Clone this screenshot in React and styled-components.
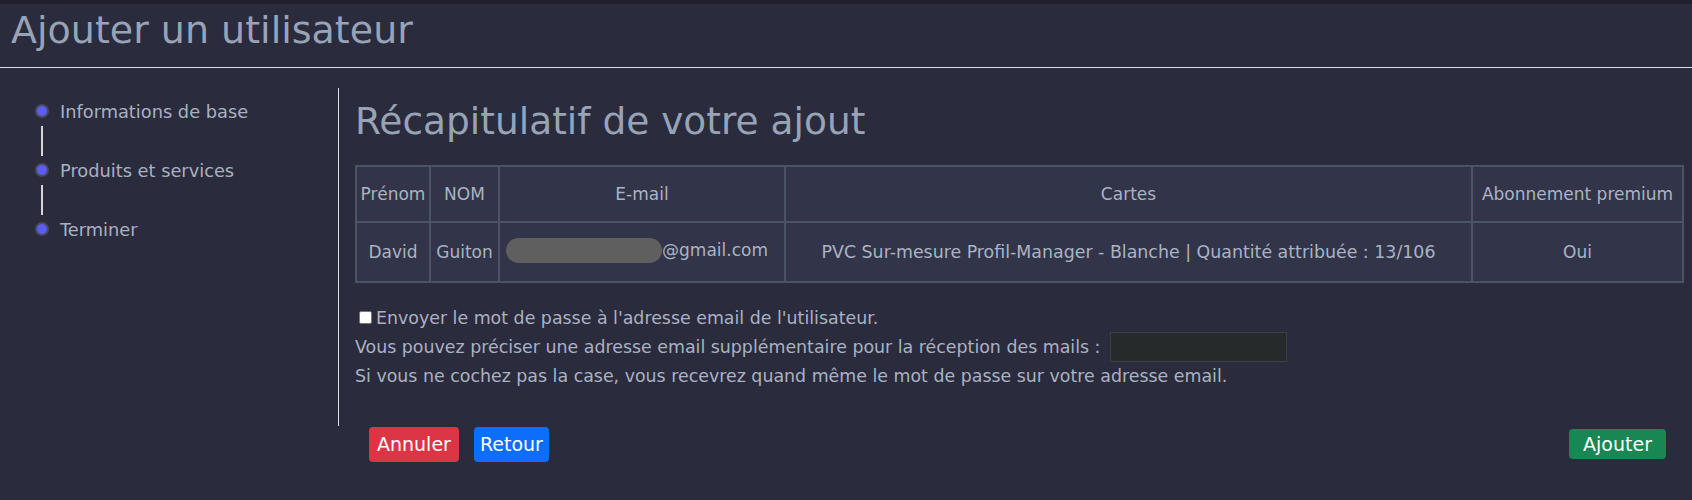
import React from "react";
import styled, { createGlobalStyle } from "styled-components";

const GlobalStyle = createGlobalStyle`
  html, body {
    margin: 0;
    padding: 0;
    background: #2a2b3d;
  }
  body {
    font-family: "DejaVu Sans", "Open Sans", sans-serif;
    color: #aab2c2;
  }
  * { box-sizing: border-box; }
`;

const Page = styled.div`
  width: 1692px;
  min-height: 500px;
  background: #2a2b3d;
`;

const TopStrip = styled.div`
  height: 4px;
  background: #1f202c;
`;

const Header = styled.header`
  height: 64px;
  padding: 4px 0 0 11px;
  border-bottom: 1px solid #dcdcdc;
`;

const Title = styled.h1`
  margin: 0;
  font-size: 38px;
  line-height: 45px;
  font-weight: 400;
  color: #98a3b6;
`;

const Body = styled.div`
  display: flex;
  padding-top: 20px;
`;

const Sidebar = styled.nav`
  width: 338px;
  flex: 0 0 338px;
  padding: 11px 0 0 35px;
`;

const Step = styled.div`
  display: flex;
  align-items: center;
  gap: 11px;
  height: 24px;
  font-size: 17.8px;
  color: #a9b1c1;
`;

const Dot = styled.span`
  width: 14px;
  height: 14px;
  border-radius: 50%;
  background: #5a5cfb;
  border: 2px solid #4a4b57;
  flex: 0 0 14px;
`;

const Connector = styled.div`
  width: 2px;
  height: 30px;
  margin: 3px 0 2px 6px;
  background: #d6d6d6;
`;

const Main = styled.main`
  flex: 1;
  padding-right: 11px;
`;

const Panel = styled.section`
  border-left: 1px solid #dedede;
  padding: 12px 0 37px 16px;
`;

const Heading = styled.h2`
  margin: 0 0 22px;
  font-size: 37.5px;
  line-height: 43px;
  font-weight: 400;
  color: #98a3b6;
`;

const Table = styled.table`
  width: 100%;
  border-collapse: collapse;
  table-layout: fixed;
  background: #323449;
  font-size: 17px;
  color: #aab3c3;
`;

const Col = styled.col`
  width: ${(p) => p.$w}px;
`;

const HeadCell = styled.th`
  border: 2px solid #4b5466;
  font-weight: 400;
  height: 56px;
  padding: 0 2px;
  text-align: center;
  white-space: nowrap;
`;

const Cell = styled.td`
  border: 2px solid #4b5466;
  height: 60px;
  padding: 0 ${(p) => p.$pr || 2}px 0 2px;
  text-align: center;
  white-space: nowrap;
  font-size: ${(p) => p.$fs || 17}px;
`;

const EmailWrap = styled.span`
  display: inline-flex;
  align-items: center;
`;

const Blur = styled.span`
  display: inline-block;
  width: 156px;
  height: 25px;
  border-radius: 13px;
  background: #5f5f5f;
`;

const Options = styled.div`
  margin-top: 21px;
  font-size: 17.4px;
  color: #aab2c2;
`;

const Line = styled.div`
  display: flex;
  align-items: center;
  min-height: 27px;
  white-space: nowrap;
  margin: ${(p) => p.$m || "0"};
`;

const Check = styled.input`
  width: 13px;
  height: 13px;
  margin: 0 4px 0 4px;
  appearance: none;
  background: #ffffff;
  border: 1px solid #767676;
  border-radius: 2px;
`;

const MailInput = styled.input`
  width: 177px;
  height: 30px;
  margin-left: 10px;
  background: #272a2b;
  border: 1px solid #3c3f42;
  color: #ddd;
  outline: none;
`;

const ButtonRow = styled.div`
  display: flex;
  align-items: center;
  gap: 15px;
  height: 36px;
  padding: 0 18px 0 31px;
`;

const Button = styled.button`
  font-family: inherit;
  font-size: 19px;
  color: #ffffff;
  border: none;
  border-radius: 4px;
  height: ${(p) => (p.$sm ? 30 : 35)}px;
  padding: 0 ${(p) => (p.$sm ? 14 : p.$tight ? 6 : 8)}px;
  background: ${(p) => p.$bg};
  cursor: pointer;
`;

const Spacer = styled.div`
  flex: 1;
`;

const steps = ["Informations de base", "Produits et services", "Terminer"];

export default function App() {
  return (
    <Page>
      <GlobalStyle />
      <TopStrip />
      <Header>
        <Title>Ajouter un utilisateur</Title>
      </Header>
      <Body>
        <Sidebar>
          {steps.map((s, i) => (
            <React.Fragment key={s}>
              {i > 0 && <Connector />}
              <Step>
                <Dot />
                {s}
              </Step>
            </React.Fragment>
          ))}
        </Sidebar>
        <Main>
          <Panel>
            <Heading>Récapitulatif de votre ajout</Heading>
            <Table>
              <colgroup>
                <Col $w={74} />
                <Col $w={69} />
                <Col $w={286} />
                <Col $w={687} />
                <Col $w={211} />
              </colgroup>
              <thead>
                <tr>
                  <HeadCell>Prénom</HeadCell>
                  <HeadCell>NOM</HeadCell>
                  <HeadCell>E-mail</HeadCell>
                  <HeadCell>Cartes</HeadCell>
                  <HeadCell>Abonnement premium</HeadCell>
                </tr>
              </thead>
              <tbody>
                <tr>
                  <Cell>David</Cell>
                  <Cell>Guiton</Cell>
                  <Cell $pr={12}>
                    <EmailWrap>
                      <Blur />
                      @gmail.com
                    </EmailWrap>
                  </Cell>
                  <Cell $fs={17.4}>
                    PVC Sur-mesure Profil-Manager - Blanche | Quantité attribuée : 13/106
                  </Cell>
                  <Cell>Oui</Cell>
                </tr>
              </tbody>
            </Table>
            <Options>
              <Line>
                <Check type="checkbox" />
                Envoyer le mot de passe à l'adresse email de l'utilisateur.
              </Line>
              <Line $m="1px 0 0">
                Vous pouvez préciser une adresse email supplémentaire pour la réception des mails :
                <MailInput type="text" />
              </Line>
              <Line>
                Si vous ne cochez pas la case, vous recevrez quand même le mot de passe sur votre adresse email.
              </Line>
            </Options>
          </Panel>
          <ButtonRow>
            <Button $bg="#dc3545">Annuler</Button>
            <Button $tight $bg="#0d6efd">Retour</Button>
            <Spacer />
            <Button $sm $bg="#198754">Ajouter</Button>
          </ButtonRow>
        </Main>
      </Body>
    </Page>
  );
}
